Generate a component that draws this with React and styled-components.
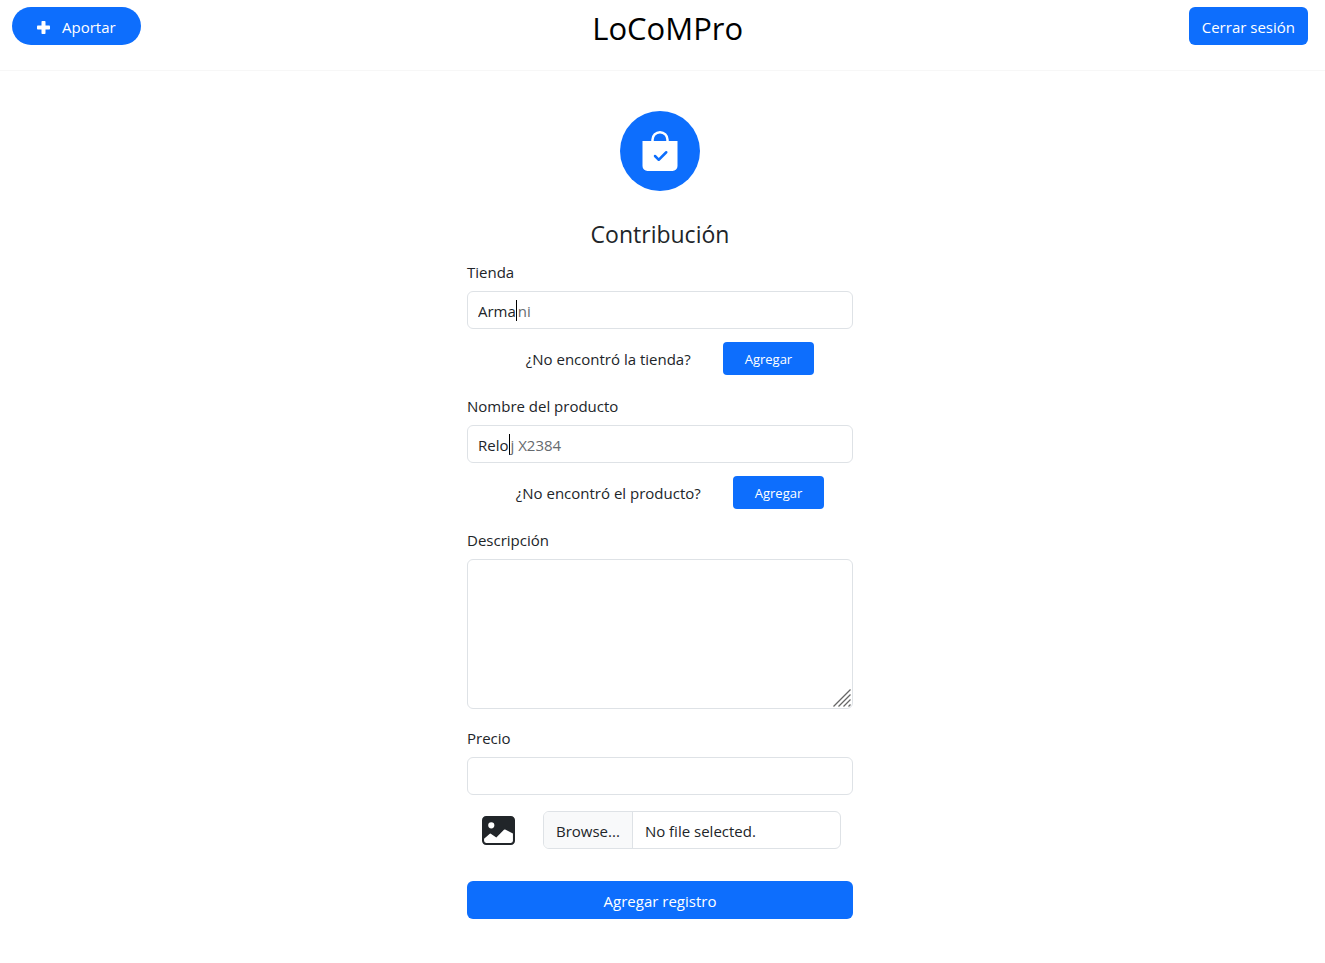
import React, { useState } from "react";
import styled, { createGlobalStyle, css } from "styled-components";
import { BsBagCheckFill, BsImageFill } from "react-icons/bs";

const GlobalStyle = createGlobalStyle`
  *, *::before, *::after { box-sizing: border-box; }
  body {
    margin: 0;
    background: #fff;
    color: #212529;
    font: 15px/24px "Open Sans", "Noto Sans", sans-serif;
  }
  button, input, textarea { font: inherit; color: inherit; }
`;

const Header = styled.header`
  display: flex;
  align-items: flex-start;
  justify-content: space-between;
  min-height: 71px;
  padding: 7px 17px 7px 12px;
  border-bottom: 1px solid #f7f7f7;
`;

const Brand = styled.a`
  padding-left: 6px;
  color: #000;
  font-size: 31px;
  line-height: 42px;
  text-decoration: none;
`;

const Button = styled.button`
  display: inline-flex;
  align-items: center;
  justify-content: center;
  gap: 12px;
  height: 38px;
  padding: 2px 13px 0;
  border: 0;
  border-radius: 6px;
  background: #0d6efd;
  color: #fff;
  cursor: pointer;
  white-space: nowrap;

  ${({ $pill }) => $pill && css`
    padding: 2px 25px 0;
    border-radius: 19px;
  `}
  ${({ $small }) => $small && css`
    height: 33px;
    padding: 1px 22px 0;
    border-radius: 4px;
    font-size: 13px;
  `}
  ${({ $block }) => $block && css`
    width: 100%;
    margin-top: 32px;
  `}
`;

const Main = styled.main`
  display: flex;
  justify-content: center;
  padding: 40px 17px 44px 12px;
`;

const Form = styled.form`
  display: flex;
  flex-direction: column;
  width: 100%;
  max-width: 386px;
`;

const Badge = styled.div`
  display: flex;
  align-items: center;
  justify-content: center;
  align-self: center;
  width: 80px;
  height: 80px;
  border-radius: 50%;
  background: #0d6efd;
  color: #fff;
`;

const Heading = styled.h1`
  margin: 28px 0 11px;
  font-size: 23px;
  font-weight: 400;
  line-height: 30px;
  text-align: center;
`;

const Label = styled.label`
  margin-bottom: 7px;
`;

const box = css`
  border: 1px solid #dee2e6;
  border-radius: 6px;
  background: #fff;
`;

const TextInput = styled.input`
  ${box}
  height: 38px;
  padding: 0 12px;
`;

const Suggest = styled.div`
  ${box}
  display: flex;
  align-items: center;
  height: 38px;
  padding: 0 10px;

  input {
    field-sizing: content;
    height: 36px;
    padding: 2px 0 0;
    border: 0;
    outline: 0;
    background: none;
  }
`;

const Caret = styled.span`
  width: 1px;
  height: 21px;
  background: #000;
`;

const Completion = styled.span`
  padding: 2px 0 0 1px;
  color: #666a6e;
  white-space: pre;
`;

const Missing = styled.div`
  display: flex;
  align-items: center;
  justify-content: center;
  gap: 32px;
  margin: 13px 0 19px;
  padding-left: 20px;
`;

const AreaWrap = styled.div`
  position: relative;
  display: flex;
  margin-bottom: 17px;

  svg {
    position: absolute;
    right: 2px;
    bottom: 2px;
    pointer-events: none;
  }
`;

const Area = styled.textarea`
  ${box}
  width: 100%;
  height: 150px;
  padding: 6px 12px;
  resize: none;
`;

const FileRow = styled.div`
  display: flex;
  align-items: center;
  gap: 28px;
  margin-top: 16px;
  padding: 0 12px 0 15px;
`;

const FilePicker = styled.label`
  ${box}
  position: relative;
  display: flex;
  flex: 1;
  height: 38px;
  line-height: 38px;
  overflow: hidden;
  cursor: pointer;

  input {
    position: absolute;
    inset: 0;
    opacity: 0;
    cursor: pointer;
  }
`;

const Browse = styled.span`
  padding: 0 12px;
  border-right: 1px solid #dee2e6;
  background: #f8f9fa;
`;

const FileName = styled.span`
  padding: 0 12px;
`;

function PlusIcon() {
  return (
    <svg width="13" height="13" viewBox="0 0 13 13" fill="currentColor" aria-hidden="true">
      <rect x="4.5" y="0" width="4" height="13" rx="0.8" />
      <rect x="0" y="4.5" width="13" height="4" rx="0.8" />
    </svg>
  );
}

function SuggestField({ id, label, initial, full, question }) {
  const [value, setValue] = useState(initial);
  const rest = value && full.startsWith(value) ? full.slice(value.length) : "";
  return (
    <>
      <Label htmlFor={id}>{label}</Label>
      <Suggest>
        <input id={id} type="text" autoComplete="off" value={value} onChange={(e) => setValue(e.target.value)} />
        <Caret />
        <Completion>{rest}</Completion>
      </Suggest>
      <Missing>
        <span>{question}</span>
        <Button type="button" $small>Agregar</Button>
      </Missing>
    </>
  );
}

export default function App() {
  const [fileName, setFileName] = useState("No file selected.");
  return (
    <>
      <GlobalStyle />
      <Header>
        <Button type="button" $pill><PlusIcon />Aportar</Button>
        <Brand href="#">LoCoMPro</Brand>
        <Button type="button">Cerrar sesión</Button>
      </Header>
      <Main>
        <Form onSubmit={(e) => e.preventDefault()}>
          <Badge><BsBagCheckFill size={40} aria-hidden="true" /></Badge>
          <Heading>Contribución</Heading>
          <SuggestField id="tienda" label="Tienda" initial="Arma" full="Armani" question="¿No encontró la tienda?" />
          <SuggestField id="producto" label="Nombre del producto" initial="Relo" full="Reloj X2384" question="¿No encontró el producto?" />
          <Label htmlFor="descripcion">Descripción</Label>
          <AreaWrap>
            <Area id="descripcion" />
            <svg width="18" height="18" viewBox="0 0 18 18" fill="none" stroke="#666" strokeWidth="1.3" aria-hidden="true">
              <path d="M.5 17.5l17-17M5.5 17.5l12-12M10.5 17.5l7-7M15.5 17.5l2-2" />
            </svg>
          </AreaWrap>
          <Label htmlFor="precio">Precio</Label>
          <TextInput id="precio" type="text" />
          <FileRow>
            <BsImageFill size={33} aria-hidden="true" />
            <FilePicker>
              <input
                type="file"
                accept="image/*"
                aria-label="Imagen"
                onChange={(e) => setFileName(e.target.files[0]?.name ?? "No file selected.")}
              />
              <Browse>Browse...</Browse>
              <FileName>{fileName}</FileName>
            </FilePicker>
          </FileRow>
          <Button type="submit" $block>Agregar registro</Button>
        </Form>
      </Main>
    </>
  );
}
